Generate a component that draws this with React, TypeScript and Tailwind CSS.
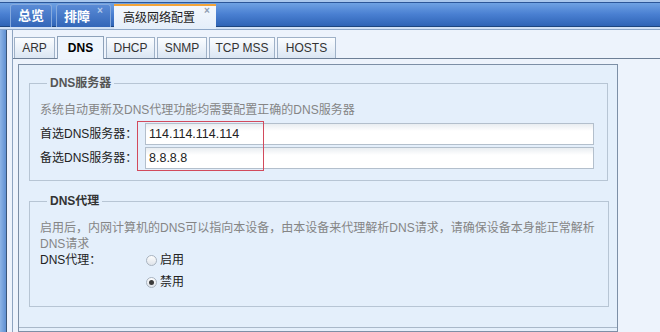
import { useState } from "react";

const font = "font-['Tahoma','Liberation_Sans','Noto_Sans_CJK_SC',sans-serif]";

const subTabs = [
  { label: "ARP", w: "w-[41px]" },
  { label: "DNS", w: "w-[47px]" },
  { label: "DHCP", w: "w-[49px]" },
  { label: "SNMP", w: "w-[50px]" },
  { label: "TCP MSS", w: "w-[66px]" },
  { label: "HOSTS", w: "w-[59px]" },
];

function Radio({ checked }: { checked: boolean }) {
  return (
    <span className="flex h-[11px] w-[11px] items-center justify-center rounded-full border border-[#a9b3bf] bg-[linear-gradient(to_bottom,#fdfdfd,#dfe4ea)]">
      {checked && <span className="h-[5px] w-[5px] rounded-full bg-[#3b3b3b]" />}
    </span>
  );
}

export default function App() {
  const [proxy, setProxy] = useState("off");

  return (
    <div className={`h-[332px] w-[660px] overflow-hidden bg-[#edf3fc] text-[12px] text-[#222] ${font}`}>
      {/* Top tab strip */}
      <div className="flex h-[30px] items-start gap-[3px] border-b border-[#8ea8c8] bg-[linear-gradient(to_bottom,#a9c7ec_0,#a9c7ec_2px,#2c5698_2px,#2c5698_3px,#6fa2e3_3px,#4a80d2_14px,#2f64b6_26px,#1e467f_26px,#1e467f_27px,#d2e2f6_27px)] pl-[10px] pt-[4px]">
        <div className="flex h-[23px] w-[42px] items-center justify-center rounded-t-[3px] border border-b-0 border-[#86aadd] bg-[linear-gradient(to_bottom,#5a8bd6,#3366b8)] text-[13px] font-bold text-white">
          总览
        </div>
        <div className="ml-[1px] flex h-[23px] w-[55px] items-start rounded-t-[3px] border border-b-0 border-[#86aadd] bg-[linear-gradient(to_bottom,#5a8bd6,#3366b8)] pl-[7px]">
          <span className="mt-[2px] text-[13px] font-bold text-white">排障</span>
          <span className="ml-[7px] text-[10px] font-bold leading-[12px] text-[#b4cbeb]">×</span>
        </div>
        <div className="flex h-[25px] w-[102px] items-start border-t-2 border-[#f2a43a] bg-[linear-gradient(to_bottom,#f4f8fd,#e4eefa)] pl-[9px]">
          <span className="mt-[3px] text-[#1d1d1d]">高级网络配置</span>
          <span className="ml-[9px] text-[10px] font-bold leading-[10px] text-[#8d9db2]">×</span>
        </div>
      </div>

      <div className="flex h-[302px]">
        {/* left frame */}
        <div className="w-[7px] border-r border-[#3b5678] bg-[linear-gradient(to_right,#8cb4e6,#5f90d2)]" />

        <div className="ml-[5px] flex flex-1 flex-col border-l border-[#8ea4c0] pt-[6px]">
          {/* sub tabs */}
          <div className="flex h-[23px] items-end gap-[2px] border-b border-[#6d7f96] pl-[1px]">
            {subTabs.map((t) =>
              t.label === "DNS" ? (
                <div
                  key={t.label}
                  className={`relative z-10 -mb-px flex h-[23px] ${t.w} items-center justify-center border border-b-0 border-[#8ea2ba] bg-[#eef5fd] font-bold text-black`}
                >
                  {t.label}
                </div>
              ) : (
                <div
                  key={t.label}
                  className={`flex h-[21px] ${t.w} items-center justify-center border border-b-0 border-[#9fb1c7] bg-[linear-gradient(to_bottom,#fbfdff,#dbe6f3)] text-[#333]`}
                >
                  {t.label}
                </div>
              )
            )}
          </div>

          {/* panel */}
          <div className="ml-[5px] mt-[5px] w-[600px] flex-1 border border-[#7d8fa6] bg-[#e4effb] pl-[10px] pr-[9px]">
            <fieldset className="mt-[10px] border border-[#b7c5d4] pb-[11px] pl-[10px] pr-[13px] pt-[11px]">
              <legend className="ml-[7px] px-[3px] font-bold leading-[16px] text-[#555]">DNS服务器</legend>
              <div className="leading-[16px] text-[#858585]">系统自动更新及DNS代理功能均需要配置正确的DNS服务器</div>
              <div className="relative mt-[5px] flex flex-col gap-[2px]">
                <div className="flex items-center">
                  <span className="w-[105px]">首选DNS服务器：</span>
                  <div className="flex h-[22px] flex-1 items-center border border-[#b3bfcc] bg-[linear-gradient(to_bottom,#e9edf1,#ffffff_7px)] pl-[3px] font-['Liberation_Sans',sans-serif] text-[12.5px]">
                    114.114.114.114
                  </div>
                </div>
                <div className="flex items-center">
                  <span className="w-[105px]">备选DNS服务器：</span>
                  <div className="flex h-[22px] flex-1 items-center border border-[#b3bfcc] bg-[linear-gradient(to_bottom,#e9edf1,#ffffff_7px)] pl-[3px] font-['Liberation_Sans',sans-serif] text-[12.5px]">
                    8.8.8.8
                  </div>
                </div>
                <div className="pointer-events-none absolute left-[97px] top-[-2px] h-[50px] w-[127px] border border-[#d24a5c]" />
              </div>
            </fieldset>

            <fieldset className="mt-[12px] border border-[#b7c5d4] pb-[16px] pl-[10px] pr-[13px] pt-[11px]">
              <legend className="ml-[7px] px-[3px] font-bold leading-[16px] text-[#333]">DNS代理</legend>
              <div className="whitespace-nowrap leading-[16px] text-[#858585]">
                启用后，内网计算机的DNS可以指向本设备，由本设备来代理解析DNS请求，请确保设备本身能正常解析
                <br />
                DNS请求
              </div>
              <div className="flex flex-col gap-[6px] leading-[16px]">
                <div className="flex items-center">
                  <span className="w-[106px]">DNS代理：</span>
                  <label className="flex items-center gap-[3px]" onClick={() => setProxy("on")}>
                    <Radio checked={proxy === "on"} />
                    <span>启用</span>
                  </label>
                </div>
                <div className="flex items-center pl-[106px]">
                  <label className="flex items-center gap-[3px]" onClick={() => setProxy("off")}>
                    <Radio checked={proxy === "off"} />
                    <span>禁用</span>
                  </label>
                </div>
              </div>
            </fieldset>

            <div className="-ml-[10px] -mr-[9px] mt-[20px] border-t border-[#a9b8c9]" />
          </div>
        </div>
      </div>
    </div>
  );
}
